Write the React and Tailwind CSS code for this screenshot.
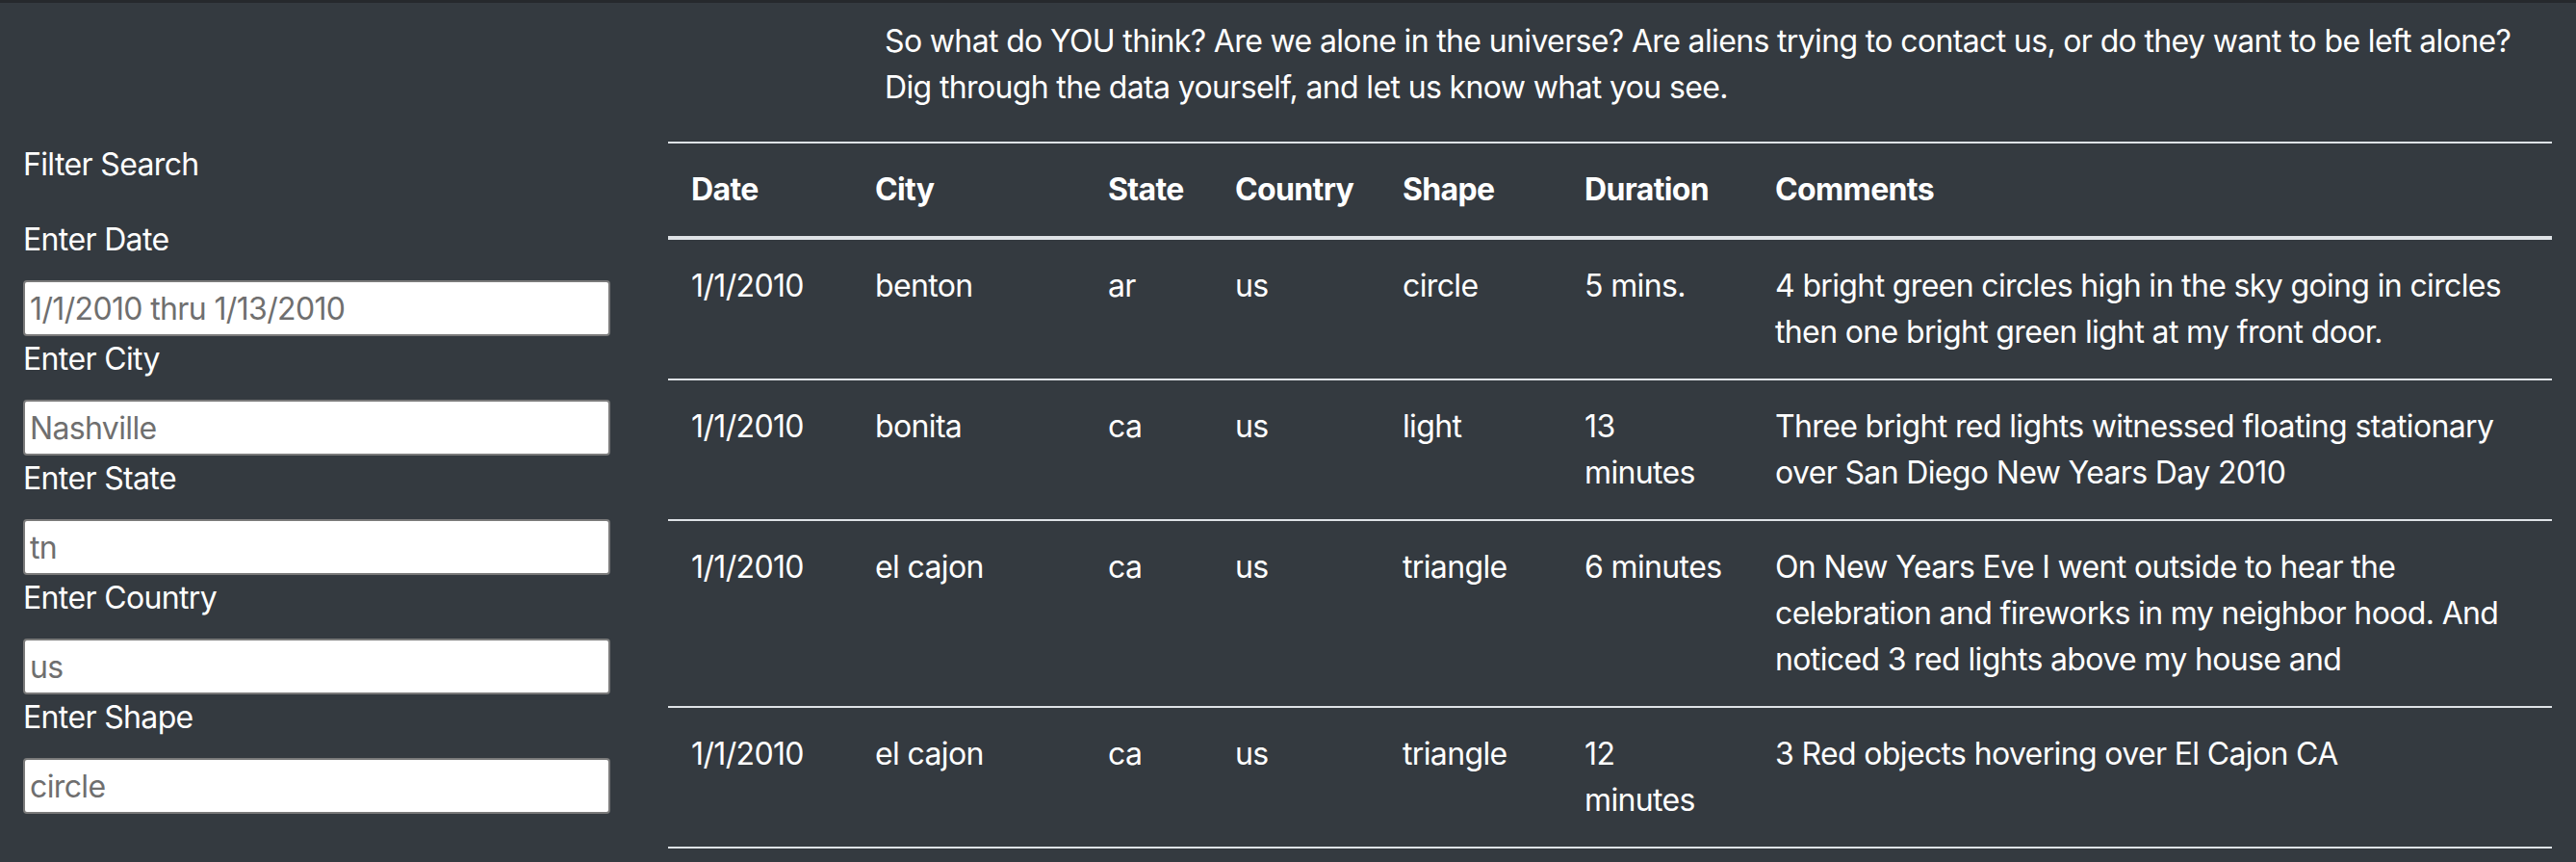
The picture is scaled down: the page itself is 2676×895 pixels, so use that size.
// UFO sightings page - filter sidebar and results table
const filters = [
    { label: 'Enter Date', placeholder: '1/1/2010 thru 1/13/2010' },
    { label: 'Enter City', placeholder: 'Nashville' },
    { label: 'Enter State', placeholder: 'tn' },
    { label: 'Enter Country', placeholder: 'us' },
    { label: 'Enter Shape', placeholder: 'circle' },
];

const sightings = [
    ['1/1/2010', 'benton', 'ar', 'us', 'circle', '5 mins.', '4 bright green circles high in the sky going in circles then one bright green light at my front door.'],
    ['1/1/2010', 'bonita', 'ca', 'us', 'light', '13 minutes', 'Three bright red lights witnessed floating stationary over San Diego New Years Day 2010'],
    ['1/1/2010', 'el cajon', 'ca', 'us', 'triangle', '6 minutes', 'On New Years Eve I went outside to hear the celebration and fireworks in my neighbor hood. And noticed 3 red lights above my house and'],
    ['1/1/2010', 'el cajon', 'ca', 'us', 'triangle', '12 minutes', '3 Red objects hovering over El Cajon CA'],
];

const columns = [
    { name: 'Date', w: 'w-[191px]' },
    { name: 'City', w: 'w-[242px]' },
    { name: 'State', w: 'w-[132px]' },
    { name: 'Country', w: 'w-[174px]' },
    { name: 'Shape', w: 'w-[189px]' },
    { name: 'Duration', w: 'w-[198px]' },
    { name: 'Comments', w: 'w-[831px]' },
];

const App = () => {
    return (
        <div className="h-[895px] overflow-hidden bg-[#343a40] text-white font-['Inter','Helvetica_Neue',sans-serif] text-[32px] leading-[48px] tracking-[-0.02em]">
            <div className="h-[3px] bg-[#26292d]" />

            <div className="px-[24px]">
                {/* Intro */}
                <p className="ml-[895px] mt-[16px] mb-[32px] whitespace-nowrap">
                    So what do YOU think? Are we alone in the universe? Are aliens trying to contact us, or do they want to be left alone?
                    <br />
                    Dig through the data yourself, and let us know what you see.
                </p>

                <div className="flex gap-[60px]">
                    {/* Filters */}
                    <aside className="w-[610px] shrink-0">
                        <div className="mb-[30px]">Filter Search</div>
                        {filters.map((f) => (
                            <div key={f.label}>
                                <label className="block mb-[18px]">{f.label}</label>
                                <input
                                    type="text"
                                    placeholder={f.placeholder}
                                    className="block w-full h-[58px] bg-white border-2 border-[#7a7a7a] rounded-[4px] px-[5px] text-[32px] tracking-[-0.02em] text-black placeholder:text-[#6f6f6f] outline-none"
                                />
                            </div>
                        ))}
                    </aside>

                    {/* Results */}
                    <table className="w-[1957px] table-fixed border-collapse text-left">
                        <colgroup>
                            {columns.map((c) => (
                                <col key={c.name} className={c.w} />
                            ))}
                        </colgroup>
                        <thead>
                            <tr>
                                {columns.map((c) => (
                                    <th key={c.name} className="p-[24px] font-bold align-bottom border-t-2 border-b-4 border-[#dee2e6]">
                                        {c.name}
                                    </th>
                                ))}
                            </tr>
                        </thead>
                        <tbody>
                            {sightings.map((row, i) => (
                                <tr key={i}>
                                    {row.map((cell, j) => (
                                        <td key={j} className="p-[24px] align-top border-y-2 border-[#dee2e6]">
                                            {cell}
                                        </td>
                                    ))}
                                </tr>
                            ))}
                        </tbody>
                    </table>
                </div>
            </div>
        </div>
    );
};

export default App;
